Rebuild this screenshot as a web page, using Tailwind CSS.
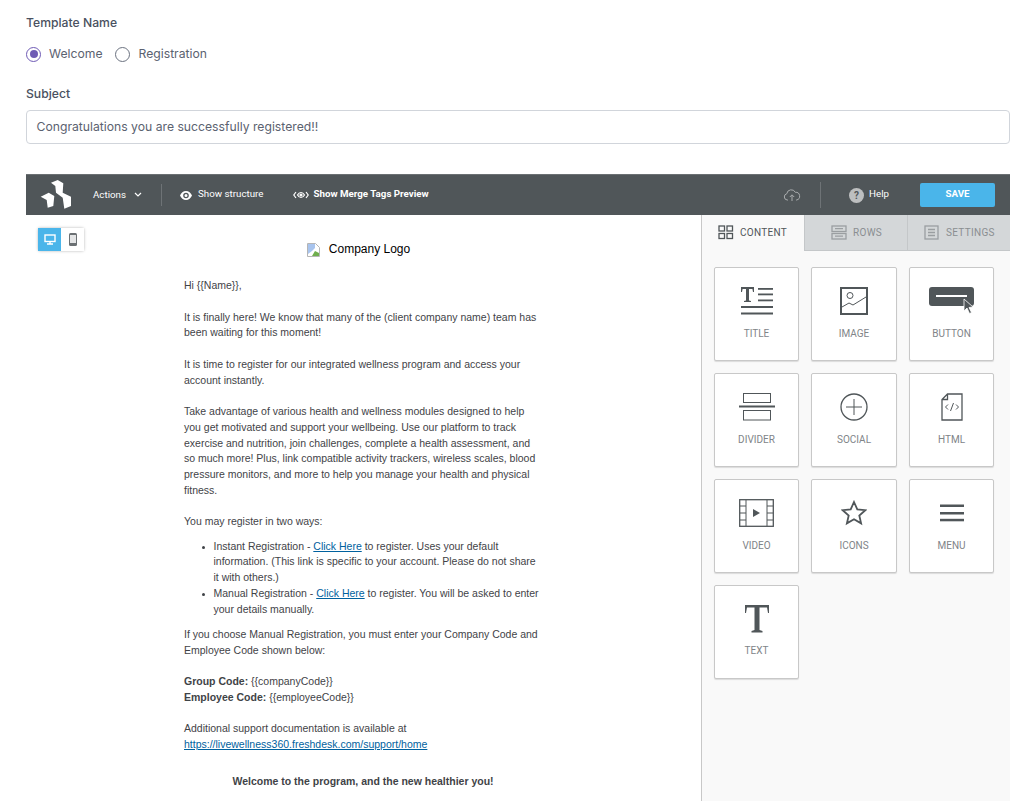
<!DOCTYPE html>
<html lang="en">
<head>
    <meta charset="UTF-8">
    <meta name="viewport" content="width=device-width, initial-scale=1.0">
    <title>Email Template</title>
    <script src="https://cdn.jsdelivr.net/npm/@tailwindcss/browser@4"></script>
</head>
<body class="bg-white h-[801px] overflow-hidden font-['Inter',sans-serif] text-[#4b5563]">
<div class="pl-[26px] pr-[17px]">

    <div class="pt-[15px] text-[12.2px] leading-[16px] font-medium text-[#4a5160]">Template Name</div>
    <div class="mt-[15px] flex items-center h-[16px] text-[12.2px] text-[#5b6270]">
        <span class="w-[15px] h-[15px] rounded-full border-[1.5px] border-[#6f5bb5] flex items-center justify-center"><span class="w-[8px] h-[8px] rounded-full bg-[#6f5bb5]"></span></span>
        <span class="ml-[8px]">Welcome</span>
        <span class="ml-[12px] w-[15px] h-[15px] rounded-full border-[1.5px] border-[#6b7280]"></span>
        <span class="ml-[9px]">Registration</span>
    </div>

    <div class="mt-[24px] text-[12.2px] leading-[16px] font-medium text-[#4a5160]">Subject</div>
    <div class="mt-[8px] h-[34px] border border-[#d1d5db] rounded-[4px] flex items-center px-[9.500px] text-[12.2px] text-[#5b6270]">Congratulations you are successfully registered!!</div>

    <!-- editor toolbar -->
    <div class="mt-[30px] h-[41px] bg-[#505659] border-t border-[#6b7073] flex items-center text-white font-['Roboto',sans-serif] text-[9.75px]">
        <svg class="ml-[14px]" width="32" height="30" viewBox="0 0 32 30" fill="#fff">
            <path d="M11 2.700L17.700 0l5.600 3.300-.6 9.400 8.300 4V26l-6.700 2.700-1.600-11-6.700-5-.7-6.700z"/>
            <path d="M.7 16.700l8-4 5.600 3.300-1 10-5.600 1.700-1-7.700z"/>
        </svg>
        <span class="ml-[21px]">Actions</span>
        <svg class="ml-[8px]" width="8" height="6" viewBox="0 0 8 6" fill="none" stroke="#fff" stroke-width="1.2"><path d="M1 1l3 3 3-3"/></svg>
        <span class="ml-[19px] w-px h-[22px] bg-[#6e7376]"></span>
        <svg class="ml-[18px]" width="12" height="9" viewBox="0 0 12 9" fill="#fff"><path d="M6 0C3.300 0 1.100 1.800 0 4.500 1.100 7.200 3.300 9 6 9s4.900-1.800 6-4.500C10.900 1.800 8.700 0 6 0zm0 7.300a2.800 2.800 0 1 1 0-5.600 2.800 2.800 0 0 1 0 5.600zM6 3a1.500 1.500 0 1 0 0 3 1.500 1.500 0 0 0 0-3z"/></svg>
        <span class="ml-[6px] -mt-[2px]">Show structure</span>
        <svg class="ml-[30px]" width="16" height="8" viewBox="0 0 16 8" fill="none" stroke="#fff" stroke-width="1.200"><path d="M3 1L.8 4 3 7M13 1l2.200 3L13 7"/><path d="M4.500 4C5.500 2.300 6.700 1.500 8 1.500s2.500.8 3.500 2.500C10.500 5.700 9.300 6.500 8 6.500S5.500 5.700 4.500 4z"/><circle cx="8" cy="4" r="1" fill="#fff"/></svg>
        <span class="ml-[4px] -mt-[2px] font-bold">Show Merge Tags Preview</span>
        <svg class="ml-auto" width="18" height="14" viewBox="0 0 18 14" fill="none" stroke="#a9acae" stroke-width="1"><path d="M5 12H4.200A3.200 3.200 0 0 1 3.800 5.700 4.500 4.500 0 0 1 12.300 4.300 3.900 3.900 0 0 1 13.500 12H13"/><path d="M9 13V7M6.800 9L9 6.800 11.200 9"/></svg>
        <span class="ml-[19px] w-px h-[26px] bg-[#6e7376]"></span>
        <span class="ml-[28px] w-[15px] h-[15px] rounded-full bg-[#bdbfc0] text-[#505659] font-bold text-[10px] leading-[15px] text-center">?</span>
        <span class="ml-[5px] -mt-[2px]">Help</span>
        <span class="ml-[31px] mr-[15px] w-[75px] h-[24px] rounded-[2px] bg-[#4ab5ea] font-bold text-center leading-[22px]">SAVE</span>
    </div>

    <div class="flex h-[586px]">
        <!-- email canvas -->
        <div class="relative w-[675px] font-['Liberation_Sans',sans-serif] text-[10.5px] leading-[15.75px] text-[#3f4347]">
            <div class="absolute left-[12px] top-[13px] flex h-[23px] rounded-[2px] shadow-[0_0_3px_rgba(0,0,0,0.3)]">
                <span class="w-[23px] bg-[#4ab5ea] flex items-center justify-center">
                    <svg width="12" height="11" viewBox="0 0 12 11" fill="none" stroke="#fff" stroke-width="1.400"><rect x="1" y="1" width="10" height="6.500"/><path d="M6 7.500V10M3 10h6"/></svg>
                </span>
                <span class="w-[23px] bg-white flex items-center justify-center">
                    <svg width="8" height="13" viewBox="0 0 8 13"><rect width="8" height="13" rx="1.500" fill="#6b7073"/><rect x="1" y="2" width="6" height="8" fill="#e4e5e6"/></svg>
                </span>
            </div>

            <div class="flex items-center justify-center h-[20px] mt-[25px] text-[12px] text-black pr-[10px]">
                <svg width="13" height="14" viewBox="0 0 13 14"><path d="M.5.500h8l4 4v9H.5z" fill="#fff" stroke="#b5b5b5"/><path d="M1 1h7v4l-3 3-4 3z" fill="#a8c4ee"/><path d="M5 13l3-5 4 2v3z" fill="#6fae4e"/></svg>
                <span class="ml-[9px]">Company Logo</span>
            </div>

            <div class="ml-[158px] w-[358px] mt-[18px]">
                <p>Hi {{Name}},</p>
                <p class="mt-[15.750px]">It is finally here! We know that many of the (client company name) team has been waiting for this moment!</p>
                <p class="mt-[15.750px]">It is time to register for our integrated wellness program and access your account instantly.</p>
                <p class="mt-[15.750px]">Take advantage of various health and wellness modules designed to help you get motivated and support your wellbeing. Use our platform to track exercise and nutrition, join challenges, complete a health assessment, and so much more! Plus, link compatible activity trackers, wireless scales, blood pressure monitors, and more to help you manage your health and physical fitness.</p>
                <p class="mt-[15.750px]">You may register in two ways:</p>
                <ul class="list-disc pl-[29.500px] mt-[8.500px] marker:text-[9px]">
                    <li>Instant Registration - <a class="text-[#00619e] underline">Click Here</a> to register. Uses your default information. (This link is specific to your account. Please do not share it with others.)</li>
                    <li>Manual Registration - <a class="text-[#00619e] underline">Click Here</a> to register. You will be asked to enter your details manually.</li>
                </ul>
                <p class="mt-[9.500px]">If you choose Manual Registration, you must enter your Company Code and Employee Code shown below:</p>
                <p class="mt-[15.750px]"><b>Group Code:</b> {{companyCode}}<br><b>Employee Code:</b> {{employeeCode}}</p>
                <p class="mt-[15.750px]">Additional support documentation is available at<br><a class="text-[#00619e] underline">https://livewellness360.freshdesk.com/support/home</a></p>
                <p class="mt-[21px] text-center font-bold">Welcome to the program, and the new healthier you!</p>
            </div>
        </div>

        <!-- side panel -->
        <div class="flex-1 border-l border-[#c8c8c8] bg-[#f9f9f9] font-['Roboto',sans-serif] text-[10px] text-[#808488]">
            <div class="flex h-[36px]">
                <div class="w-[102px] flex items-center pl-[16px] pb-[1px] text-[#505659]">
                    <svg width="16" height="15" viewBox="0 0 16 15" fill="none" stroke="#505659" stroke-width="1.300"><rect x="1" y="1" width="5.500" height="5"/><rect x="9" y="1" width="5.500" height="5"/><rect x="1" y="8.500" width="5.500" height="5"/><rect x="9" y="8.500" width="5.500" height="5"/></svg>
                    <span class="ml-[6px] tracking-[0.3px]">CONTENT</span>
                </div>
                <div class="w-[103px] flex items-center pl-[26px] bg-[#d4d7d9] border-l border-b border-[#c4c7c9] text-[#8a8e91]">
                    <svg width="16" height="15" viewBox="0 0 16 15" fill="none" stroke="#9a9ea1" stroke-width="1.300"><rect x="1" y="1" width="14" height="5.500"/><rect x="1" y="8.500" width="14" height="5.500"/><path d="M4 3.700h8M4 11.200h8"/></svg>
                    <span class="ml-[6px] tracking-[0.3px]">ROWS</span>
                </div>
                <div class="flex-1 flex items-center pl-[16px] bg-[#d4d7d9] border-l border-b border-[#c4c7c9] text-[#8a8e91]">
                    <svg width="15" height="15" viewBox="0 0 15 15" fill="none" stroke="#9a9ea1" stroke-width="1.300"><rect x="1" y="1" width="13" height="13"/><path d="M4 4.500h7M4 7.500h7M4 10.500h7"/></svg>
                    <span class="ml-[7px] tracking-[0.3px]">SETTINGS</span>
                </div>
            </div>

            <div class="grid grid-cols-[85px_86px_85px] gap-x-[12px] gap-y-[12px] pl-[12px] pt-[16px] auto-rows-[94px] text-center">
                <div class="bg-white border border-[#c8c8c8] rounded-[2px] shadow-[0_1px_1px_rgba(0,0,0,0.12)] flex flex-col items-center pt-[19px]">
                    <svg width="32" height="28" viewBox="0 0 32 28" fill="#505659"><path d="M0 0h13v5h-1l-.6-3H8v11.500l2 .5v1H3v-1l2-.5V2H1.600L1 5H0z"/><rect x="17" y="1" width="15" height="1.800"/><rect x="17" y="6.500" width="15" height="1.800"/><rect x="17" y="12.500" width="15" height="1.800"/><rect x="0" y="19" width="32" height="2"/><rect x="0" y="25.500" width="32" height="2"/></svg>
                    <span class="mt-[11px]">TITLE</span>
                </div>
                <div class="bg-white border border-[#c8c8c8] rounded-[2px] shadow-[0_1px_1px_rgba(0,0,0,0.12)] flex flex-col items-center pt-[19px]">
                    <svg width="28" height="28" viewBox="0 0 28 28" fill="none" stroke="#505659"><rect x="1" y="1" width="26" height="26" stroke-width="2"/><circle cx="10" cy="8.500" r="3"/><path d="M2 20l7-4 4 2 13-8"/></svg>
                    <span class="mt-[11px]">IMAGE</span>
                </div>
                <div class="bg-white border border-[#c8c8c8] rounded-[2px] shadow-[0_1px_1px_rgba(0,0,0,0.12)] flex flex-col items-center pt-[19px]">
                    <svg width="46" height="28" viewBox="0 0 46 28"><rect width="45" height="19" rx="3" fill="#505659"/><rect x="7" y="8" width="31" height="2" fill="#fff"/><path d="M35 12l0 12 3-3 2.500 5.500 2-1-2.500-5 4-.5z" fill="#505659" stroke="#fff" stroke-width=".8"/></svg>
                    <span class="mt-[11px]">BUTTON</span>
                </div>

                <div class="bg-white border border-[#c8c8c8] rounded-[2px] shadow-[0_1px_1px_rgba(0,0,0,0.12)] flex flex-col items-center pt-[19px]">
                    <svg width="36" height="28" viewBox="0 0 36 28" fill="none" stroke="#505659"><rect x="4.500" y=".5" width="27" height="9"/><rect x="4.500" y="17.500" width="27" height="9.500"/><path d="M0 13.500h36" stroke-width="2"/></svg>
                    <span class="mt-[11px]">DIVIDER</span>
                </div>
                <div class="bg-white border border-[#c8c8c8] rounded-[2px] shadow-[0_1px_1px_rgba(0,0,0,0.12)] flex flex-col items-center pt-[19px]">
                    <svg width="28" height="28" viewBox="0 0 28 28" fill="none" stroke="#505659"><circle cx="14" cy="14" r="13" stroke-width="1.300"/><path d="M14 6v16M6 14h16"/></svg>
                    <span class="mt-[11px]">SOCIAL</span>
                </div>
                <div class="bg-white border border-[#c8c8c8] rounded-[2px] shadow-[0_1px_1px_rgba(0,0,0,0.12)] flex flex-col items-center pt-[19px]">
                    <svg width="22" height="28" viewBox="0 0 22 28" fill="none" stroke="#505659"><path d="M6.500 1H21v26H1V6.500zM6.500 1v5.500H1" stroke-width="1.300"/><path d="M7 11.500L4.500 14 7 16.500M15 11.500l2.500 2.500-2.500 2.500M12.500 10l-3 8"/></svg>
                    <span class="mt-[11px]">HTML</span>
                </div>

                <div class="bg-white border border-[#c8c8c8] rounded-[2px] shadow-[0_1px_1px_rgba(0,0,0,0.12)] flex flex-col items-center pt-[19px]">
                    <svg width="35" height="28" viewBox="0 0 35 28" fill="none" stroke="#505659"><rect x=".7" y=".7" width="33.600" height="26.600" stroke-width="1.300"/><path d="M7 1v26M28 1v26M1 7h6M1 14h6M1 21h6M28 7h6M28 14h6M28 21h6"/><path d="M14 10l7 4-7 4z" fill="#505659" stroke="none"/></svg>
                    <span class="mt-[11px]">VIDEO</span>
                </div>
                <div class="bg-white border border-[#c8c8c8] rounded-[2px] shadow-[0_1px_1px_rgba(0,0,0,0.12)] flex flex-col items-center pt-[20px]">
                    <svg width="26" height="26" viewBox="0 0 26 26" fill="none" stroke="#505659" stroke-width="1.800"><path d="M13 2l3.300 7.400 8 .8-6 5.300 1.800 7.900-7.100-4.100-7.100 4.100 1.800-7.900-6-5.300 8-.8z"/></svg>
                    <span class="mt-[12px]">ICONS</span>
                </div>
                <div class="bg-white border border-[#c8c8c8] rounded-[2px] shadow-[0_1px_1px_rgba(0,0,0,0.12)] flex flex-col items-center pt-[19px]">
                    <svg width="24" height="28" viewBox="0 0 24 28" fill="#505659"><rect y="5.500" width="24" height="2.500"/><rect y="13" width="24" height="2.500"/><rect y="19.800" width="24" height="2.500"/></svg>
                    <span class="mt-[11px]">MENU</span>
                </div>

                <div class="bg-white border border-[#c8c8c8] rounded-[2px] shadow-[0_1px_1px_rgba(0,0,0,0.12)] flex flex-col items-center pt-[19px]">
                    <svg width="24" height="28" viewBox="0 0 24 28" fill="#505659"><path d="M0 0h24v8h-1l-1-5.500h-7.500V25l3 1v1.500H6.500V26l3-1V2.500H2L1 8H0z"/></svg>
                    <span class="mt-[10px]">TEXT</span>
                </div>
            </div>
        </div>
    </div>
</div>
</body>
</html>
